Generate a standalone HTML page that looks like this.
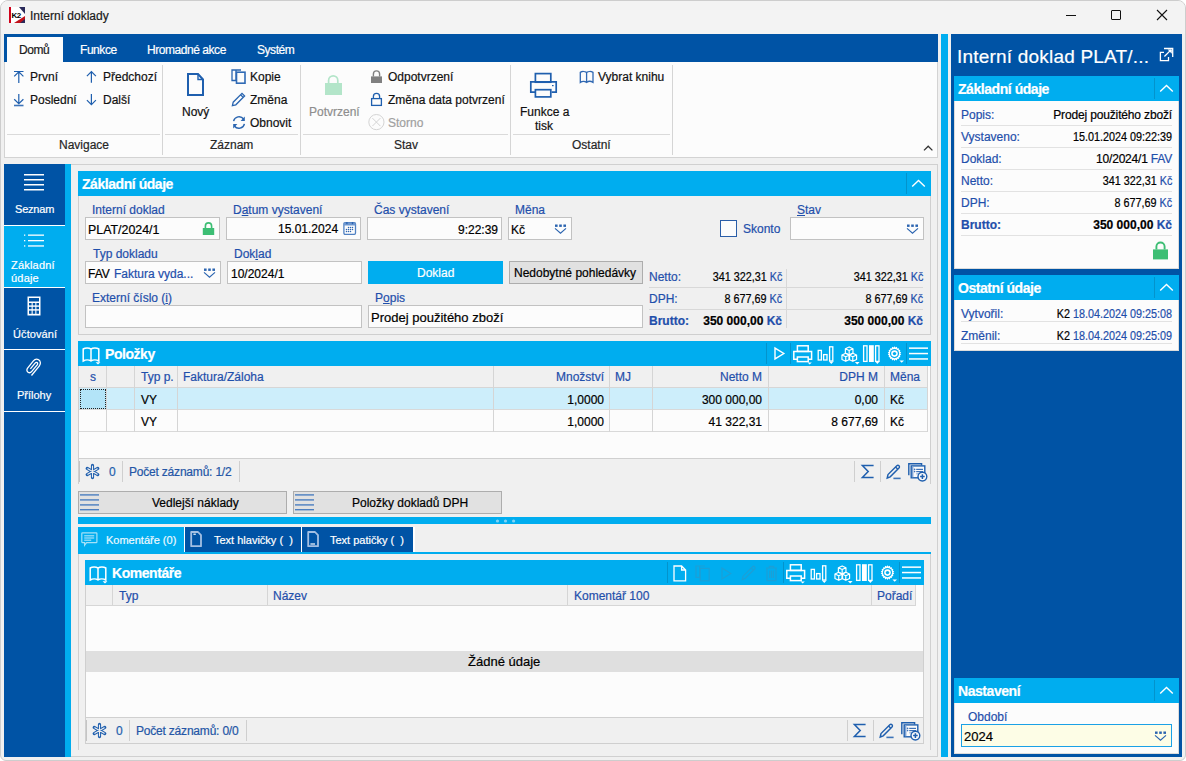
<!DOCTYPE html>
<html><head><meta charset="utf-8">
<style>
*{box-sizing:border-box;margin:0;padding:0}
html,body{width:1186px;height:761px;overflow:hidden;background:#ffffff}
body{font-family:"Liberation Sans",sans-serif;font-size:12px;color:#000;position:relative}
.a{position:absolute}
.t{position:absolute;white-space:nowrap;font-size:12px;line-height:16px;-webkit-text-stroke:0.2px currentColor}
.b{font-weight:bold}
.hdr{font-size:14px;letter-spacing:-0.45px}
.w{color:#fff}
.lb{color:#1f4fab}
.nv{background:#0053a5}
.cy{background:#00adef}
.inp{position:absolute;background:#fcfcfc;border:1px solid #c2c2c2}
.btn{position:absolute;background:#e1e1e1;border:1px solid #adadad}
.hl{position:absolute;height:1px;background:#dadada}
.vl{position:absolute;width:1px;background:#d5d5d5}
svg{position:absolute;overflow:visible}
</style></head><body>
<!-- window -->
<div class="a" style="left:0;top:0;width:1186px;height:761px;background:#f0f0f0;border:1px solid #cdcdcd;border-radius:8px 8px 6px 6px;overflow:hidden">
</div>
<!-- title bar -->
<div class="a" style="left:1px;top:1px;width:1184px;height:33px;background:#f3f3f3;border-radius:7px 7px 0 0"></div>
<svg style="left:9px;top:7px" width="16" height="16" viewBox="0 0 16 16">
<rect x="0" y="0" width="16" height="16" fill="#fff"/>
<rect x="0" y="0" width="2" height="16" fill="#d0021b"/>
<path d="M10 0H16V7Z" fill="#2a2a5a"/>
<path d="M16 9V16H5Z" fill="#c0101a"/>
<path d="M16 12V16H11Z" fill="#2a2a5a"/>
<text x="2.6" y="11" font-family="Liberation Sans" font-weight="bold" font-size="8" letter-spacing="-0.6" fill="#000">K2</text>
</svg>
<div class="t" style="left:30px;top:8px;color:#1a1a1a">Interní doklady</div>
<div class="a" style="left:1066px;top:15px;width:10px;height:1px;background:#111"></div>
<div class="a" style="left:1111px;top:10px;width:10px;height:10px;border:1px solid #111;border-radius:1px"></div>
<svg style="left:1157px;top:10px" width="10" height="10" viewBox="0 0 10 10"><path d="M0 0L10 10M10 0L0 10" stroke="#111" stroke-width="1.1"/></svg>

<!-- RIBBON -->
<div class="a nv" style="left:4px;top:34px;width:934px;height:28px"></div>
<div class="a" style="left:7px;top:37px;width:56px;height:25px;background:#fcfcfc"></div>
<div class="t" style="left:19px;top:42px;color:#1a1a1a;letter-spacing:-0.45px">Domů</div>
<div class="t w" style="left:80px;top:42px;letter-spacing:-0.45px">Funkce</div>
<div class="t w" style="left:147px;top:42px;letter-spacing:-0.45px">Hromadné akce</div>
<div class="t w" style="left:257px;top:42px;letter-spacing:-0.45px">Systém</div>
<div class="a" style="left:4px;top:62px;width:934px;height:96px;background:#fcfcfc;border:1px solid #d3d3d3;border-top:none"></div>
<!-- group separators -->
<div class="vl" style="left:162px;top:65px;height:90px"></div>
<div class="vl" style="left:300px;top:65px;height:90px"></div>
<div class="vl" style="left:510px;top:65px;height:90px"></div>
<div class="vl" style="left:672px;top:65px;height:90px"></div>
<div class="hl" style="left:7px;top:134px;width:153px"></div>
<div class="hl" style="left:165px;top:134px;width:133px"></div>
<div class="hl" style="left:303px;top:134px;width:205px"></div>
<div class="hl" style="left:513px;top:134px;width:157px"></div>
<div class="t" style="left:59px;top:137px;color:#262626">Navigace</div>
<div class="t" style="left:210px;top:137px;color:#262626">Záznam</div>
<div class="t" style="left:394px;top:137px;color:#262626">Stav</div>
<div class="t" style="left:572px;top:137px;color:#262626">Ostatní</div>
<!-- Navigace -->
<svg style="left:13px;top:70px" width="12" height="14" viewBox="0 0 12 14"><g stroke="#1f5fae" stroke-width="1.2" fill="none"><path d="M1 1.5H10.5M5.8 2V13M1.2 6.4L5.8 1.9L10.4 6.4"/></g></svg>
<div class="t" style="left:30px;top:69px;color:#111">První</div>
<svg style="left:13px;top:93px" width="12" height="14" viewBox="0 0 12 14"><g stroke="#1f5fae" stroke-width="1.2" fill="none"><path d="M5.8 1V11.2M1.2 6.2L5.8 10.7L10.4 6.2"/><path d="M1 12.5H10.5" stroke-width="1.6" stroke="#3d74b8"/></g></svg>
<div class="t" style="left:30px;top:92px;color:#111">Poslední</div>
<svg style="left:86px;top:70px" width="12" height="14" viewBox="0 0 12 14"><g stroke="#1f5fae" stroke-width="1.2" fill="none"><path d="M5.4 1.6V12.8M0.9 6.2L5.4 1.7L9.9 6.2"/></g></svg>
<div class="t" style="left:103px;top:69px;color:#111">Předchozí</div>
<svg style="left:86px;top:93px" width="12" height="14" viewBox="0 0 12 14"><g stroke="#1f5fae" stroke-width="1.2" fill="none"><path d="M5.4 1V12M0.9 7.1L5.4 11.6L9.9 7.1"/></g></svg>
<div class="t" style="left:103px;top:92px;color:#111">Další</div>
<!-- Záznam -->
<svg style="left:187px;top:73px" width="18" height="23" viewBox="0 0 18 23"><g stroke="#1f5fae" stroke-width="2" fill="none"><path d="M1 1H11L16 6.5V22H1Z"/><path d="M11 1V6.5H16" stroke-width="1.4"/></g></svg>
<div class="t" style="left:182px;top:104px;color:#111">Nový</div>
<svg style="left:231px;top:69px" width="15" height="16" viewBox="0 0 15 16"><g stroke="#2a65b0" stroke-width="1.3" fill="none"><path d="M5 2.5V1H10M1 1H5V11.5H1Z"/><rect x="5.5" y="3.2" width="8.5" height="11" stroke="#2f6ab5" stroke-width="1.6"/></g></svg>
<div class="t" style="left:250px;top:69px;color:#111">Kopie</div>
<svg style="left:231px;top:92px" width="15" height="15" viewBox="0 0 15 15"><g stroke="#2a65b0" stroke-width="1.3" fill="none"><path d="M1.4 13.6L2.2 10.2L11 1.4L13.6 4L4.8 12.8Z M9.6 2.8L12.2 5.4"/></g></svg>
<div class="t" style="left:250px;top:92px;color:#111">Změna</div>
<svg style="left:232px;top:115px" width="14" height="15" viewBox="0 0 14 15"><g stroke="#2a65b0" stroke-width="1.4" fill="none"><path d="M1.6 6.2A5.6 5.6 0 0 1 11.6 4"/><path d="M12.4 8.8A5.6 5.6 0 0 1 2.4 11"/></g><path d="M12.8 1.6V6H8.6Z" fill="#2a65b0"/><path d="M1.2 13.4V9H5.4Z" fill="#2a65b0"/></svg>
<div class="t" style="left:250px;top:115px;color:#111">Obnovit</div>
<!-- Stav -->
<svg style="left:324px;top:74px" width="19" height="22" viewBox="0 0 19 22"><path d="M4.6 9V6.4A4.6 4.6 0 0 1 13.8 6.4V9" stroke="#b3e5c9" stroke-width="1.7" fill="none"/><rect x="1" y="9" width="17" height="12" fill="#b3e5c9"/></svg>
<div class="t" style="left:309px;top:104px;color:#8e8e8e">Potvrzení</div>
<svg style="left:370px;top:69px" width="13" height="15" viewBox="0 0 13 15"><path d="M3.4 7.4V5A3 3 0 0 1 9.6 5V7.4" stroke="#808080" stroke-width="1.4" fill="none"/><rect x="1" y="7.4" width="11" height="6.6" fill="#808080"/></svg>
<div class="t" style="left:388px;top:69px;color:#111">Odpotvrzení</div>
<svg style="left:370px;top:92px" width="13" height="15" viewBox="0 0 13 15"><path d="M3.4 6.4V4.5A3 3 0 0 1 9.6 4.5V6.4" stroke="#1f5fae" stroke-width="1.3" fill="none"/><rect x="1.6" y="6.6" width="9.8" height="6.8" stroke="#1f5fae" stroke-width="1.3" fill="none"/></svg>
<div class="t" style="left:388px;top:92px;color:#111">Změna data potvrzení</div>
<svg style="left:368px;top:114px" width="17" height="17" viewBox="0 0 17 17"><circle cx="8.4" cy="8.1" r="7.6" stroke="#d4d4d4" stroke-width="1" fill="none"/><path d="M4.4 4.1L12.4 12.1M12.4 4.1L4.4 12.1" stroke="#d4d4d4" stroke-width="1"/></svg>
<div class="t" style="left:388px;top:115px;color:#a0a0a0">Storno</div>
<!-- Ostatní -->
<svg style="left:529px;top:72px" width="29" height="26" viewBox="0 0 29 26"><g stroke="#1f5fae" stroke-width="1.7" fill="none"><rect x="6.4" y="1.6" width="15.4" height="8.6"/><path d="M6.4 20.2H1.8V9.9H27.2V20.2H22.6"/><rect x="6.4" y="17.7" width="15.4" height="7.2"/></g><rect x="23" y="13" width="1.6" height="1.2" fill="#1f5fae"/></svg>
<div class="t" style="left:520px;top:104px;color:#111">Funkce a</div>
<div class="t" style="left:535px;top:118px;color:#111">tisk</div>
<svg style="left:579px;top:70px" width="16" height="14" viewBox="0 0 16 14"><g stroke="#3068b2" stroke-width="1.3" fill="none"><path d="M7.6 12.4V2.6C6 1.2 3 1.2 1.3 2.4V12.4C3 11.2 6 11.2 7.6 12.4C9.2 11.2 12.2 11.2 14 12.4V2.4C12.2 1.2 9.2 1.2 7.6 2.6"/></g></svg>
<div class="t" style="left:598px;top:69px;color:#111">Vybrat knihu</div>
<svg style="left:923px;top:145px" width="11" height="7" viewBox="0 0 11 7"><path d="M1 5.4L5.2 1.2L9.4 5.4" stroke="#333" stroke-width="1.3" fill="none"/></svg>

<!-- MAIN -->
<div class="a" style="left:4px;top:164px;width:934px;height:593px;background:#f0f0f0;border:1px solid #d0d0d0;border-left:none"></div>
<!-- sidebar -->
<div class="a nv" style="left:4px;top:164px;width:61px;height:593px"></div>
<div class="a cy" style="left:65px;top:164px;width:6px;height:593px"></div>
<div class="a cy" style="left:4px;top:226px;width:61px;height:61px"></div>
<div class="a" style="left:4px;top:225px;width:61px;height:1px;background:#fff"></div>
<div class="a" style="left:4px;top:287px;width:61px;height:1px;background:#fff"></div>
<div class="a" style="left:4px;top:349px;width:61px;height:1px;background:#fff"></div>
<div class="a" style="left:4px;top:411px;width:61px;height:1px;background:#fff"></div>
<svg style="left:24px;top:173px" width="21" height="18" viewBox="0 0 21 18"><g fill="#fff"><rect x="0" y="1" width="20" height="1.5"/><rect x="0" y="6" width="20" height="1.5"/><rect x="0" y="11" width="20" height="1.5"/><rect x="0" y="16" width="20" height="1.5"/></g></svg>
<div class="t w" style="left:15px;top:201px;font-size:11px;letter-spacing:-0.2px">Seznam</div>
<svg style="left:24px;top:233px" width="21" height="15" viewBox="0 0 21 15"><g fill="#fff"><rect x="0" y="1.5" width="1.3" height="1.3"/><rect x="0" y="7" width="1.3" height="1.3"/><rect x="0" y="12.3" width="1.3" height="1.3"/><rect x="4" y="1.5" width="16" height="1.3"/><rect x="4" y="7" width="16" height="1.3"/><rect x="4" y="12.3" width="16" height="1.3"/></g></svg>
<div class="t w" style="left:11px;top:257px;font-size:11px;letter-spacing:0.2px">Základní</div>
<div class="t w" style="left:11px;top:270px;font-size:11px;letter-spacing:0.2px">údaje</div>
<svg style="left:27px;top:296px" width="14" height="20" viewBox="0 0 14 20"><g fill="#fff"><path d="M0.5 0.5H13.5V19.5H0.5Z M2 2V5.5H12V2Z" fill-rule="evenodd"/></g><g fill="#0053a5"><rect x="2" y="7" width="2.6" height="2.4"/><rect x="5.7" y="7" width="2.6" height="2.4"/><rect x="9.4" y="7" width="2.6" height="2.4"/><rect x="2" y="10.8" width="2.6" height="2.4"/><rect x="5.7" y="10.8" width="2.6" height="2.4"/><rect x="9.4" y="10.8" width="2.6" height="2.4"/><rect x="2" y="14.6" width="2.6" height="3.2"/><rect x="5.7" y="14.6" width="2.6" height="3.2"/><rect x="9.4" y="14.6" width="2.6" height="3.2"/></g></svg>
<div class="t w" style="left:13px;top:326px;font-size:11px;letter-spacing:0.1px">Účtování</div>
<svg style="left:26px;top:358px" width="17" height="20" viewBox="0 0 17 20"><path d="M5.5 17.5L13.4 7.8C15.2 5.6 14.4 2.6 12.4 1.6C10.6 0.6 8.6 1.4 7.4 2.9L1.6 10.1C0.4 11.6 0.8 13.4 2 14.2C3.2 15 4.8 14.6 5.8 13.4L11.2 6.8C11.9 5.9 11.7 5 11.1 4.6C10.5 4.2 9.7 4.4 9.1 5.1L4.4 10.8" stroke="#fff" stroke-width="1.3" fill="none"/></svg>
<div class="t w" style="left:17px;top:387px;font-size:11px">Přílohy</div>

<!-- Základní údaje panel -->
<div class="a cy" style="left:78px;top:171px;width:853px;height:25px"></div>
<div class="t w b hdr" style="left:82px;top:176px">Základní údaje</div>
<div class="a" style="left:906px;top:173px;width:1px;height:21px;background:#0393cc"></div>
<svg style="left:911px;top:179px" width="15" height="9" viewBox="0 0 15 9"><path d="M1.2 7.6L7.5 1.5L13.8 7.6" stroke="#fff" stroke-width="1.4" fill="none"/></svg>
<div class="a" style="left:78px;top:196px;width:853px;height:139px;border:1px solid #cfcfcf;border-top:none"></div>
<!-- row1 -->
<div class="t lb" style="left:92px;top:202px">Interní doklad</div>
<div class="inp" style="left:85px;top:217px;width:135px;height:23px"></div>
<div class="t" style="left:88px;top:222px;font-size:12.4px">PLAT/2024/1</div>
<svg style="left:202px;top:221px" width="13" height="15" viewBox="0 0 13 15"><path d="M3.4 7.4V5A3 3 0 0 1 9.6 5V7.4" stroke="#3dbe74" stroke-width="1.6" fill="none"/><rect x="0.8" y="7" width="11.4" height="7" fill="#3dbe74"/></svg>
<div class="t lb" style="left:233px;top:202px">D<u>a</u>tum vystavení</div>
<div class="inp" style="left:226px;top:217px;width:135px;height:23px"></div>
<div class="t" style="left:278px;top:221px">15.01.2024</div>
<svg style="left:342px;top:221px" width="15" height="15" viewBox="0 0 15 15"><rect x="1.9" y="1.7" width="11.6" height="11.6" rx="1.2" stroke="#4f80c2" stroke-width="1.3" fill="#fcfcfc"/><rect x="1.9" y="1.7" width="11.6" height="2.8" fill="#6f98d0"/><rect x="4.2" y="1" width="1.4" height="2.2" rx="0.6" fill="#2a62b0"/><rect x="9.8" y="1" width="1.4" height="2.2" rx="0.6" fill="#2a62b0"/><g fill="#2f66b2"><circle cx="6.5" cy="6.5" r="0.75"/><circle cx="8.5" cy="6.5" r="0.75"/><circle cx="10.5" cy="6.5" r="0.75"/><circle cx="4.5" cy="8.5" r="0.75"/><circle cx="6.5" cy="8.5" r="0.75"/><circle cx="8.5" cy="8.5" r="0.75"/><circle cx="10.5" cy="8.5" r="0.75"/><circle cx="4.5" cy="10.5" r="0.75"/><circle cx="6.5" cy="10.5" r="0.75"/><circle cx="8.5" cy="10.5" r="0.75"/></g></svg>
<div class="t lb" style="left:374px;top:202px">Čas vystavení</div>
<div class="inp" style="left:367px;top:217px;width:135px;height:23px"></div>
<div class="t" style="left:458px;top:222px">9:22:39</div>
<div class="t lb" style="left:515px;top:202px">Měna</div>
<div class="inp" style="left:508px;top:217px;width:64px;height:23px"></div>
<div class="t" style="left:511px;top:222px">Kč</div>
<svg class="dd" style="left:554px;top:224px" width="13" height="11" viewBox="0 0 13 11"><g fill="#2b64b0"><rect x="1" y="0.5" width="2.6" height="2.4"/><rect x="5.2" y="0.5" width="2.6" height="2.4"/><rect x="9.4" y="0.5" width="2.6" height="2.4"/></g><path d="M1 4.4L6.5 9.2L12 4.4" stroke="#2b64b0" stroke-width="1.2" fill="none"/></svg>
<div class="a" style="left:720px;top:220px;width:17px;height:17px;border:1.5px solid #2a5ea8;background:#fcfcfc"></div>
<div class="t lb" style="left:743px;top:221px">Skonto</div>
<div class="t lb" style="left:797px;top:202px"><u>S</u>tav</div>
<div class="inp" style="left:790px;top:217px;width:134px;height:23px"></div>
<svg style="left:906px;top:224px" width="13" height="11" viewBox="0 0 13 11"><g fill="#2b64b0"><rect x="1" y="0.5" width="2.6" height="2.4"/><rect x="5.2" y="0.5" width="2.6" height="2.4"/><rect x="9.4" y="0.5" width="2.6" height="2.4"/></g><path d="M1 4.4L6.5 9.2L12 4.4" stroke="#2b64b0" stroke-width="1.2" fill="none"/></svg>
<!-- row2 -->
<div class="t lb" style="left:93px;top:246px">Typ dokladu</div>
<div class="inp" style="left:85px;top:261px;width:136px;height:23px"></div>
<div class="t" style="left:88px;top:266px">FAV</div>
<div class="t lb" style="left:114px;top:266px">Faktura vyda...</div>
<svg style="left:203px;top:268px" width="13" height="11" viewBox="0 0 13 11"><g fill="#2b64b0"><rect x="1" y="0.5" width="2.6" height="2.4"/><rect x="5.2" y="0.5" width="2.6" height="2.4"/><rect x="9.4" y="0.5" width="2.6" height="2.4"/></g><path d="M1 4.4L6.5 9.2L12 4.4" stroke="#2b64b0" stroke-width="1.2" fill="none"/></svg>
<div class="t lb" style="left:234px;top:246px">Dok<u>l</u>ad</div>
<div class="inp" style="left:227px;top:261px;width:135px;height:23px"></div>
<div class="t" style="left:231px;top:266px">10/2024/1</div>
<div class="a cy" style="left:368px;top:261px;width:135px;height:23px"></div>
<div class="t w" style="left:417px;top:265px">Doklad</div>
<div class="btn" style="left:509px;top:261px;width:134px;height:23px"></div>
<div class="t" style="left:514px;top:265px">Nedobytné pohledávky</div>
<!-- totals -->
<div class="vl" style="left:786px;top:269px;height:59px;background:#d8d8d8"></div>
<div class="hl" style="left:649px;top:287px;width:274px;background:#d8d8d8"></div>
<div class="hl" style="left:649px;top:309px;width:274px;background:#d8d8d8"></div>
<div class="t lb" style="left:649px;top:269px">Netto:</div>
<div class="t" style="right:404px;top:269px;transform:scaleX(0.9);transform-origin:100% 50%">341 322,31 <span class="lb">Kč</span></div>
<div class="t" style="right:263px;top:269px;transform:scaleX(0.9);transform-origin:100% 50%">341 322,31 <span class="lb">Kč</span></div>
<div class="t lb" style="left:649px;top:291px">DPH:</div>
<div class="t" style="right:404px;top:291px;transform:scaleX(0.9);transform-origin:100% 50%">8 677,69 <span class="lb">Kč</span></div>
<div class="t" style="right:263px;top:291px;transform:scaleX(0.9);transform-origin:100% 50%">8 677,69 <span class="lb">Kč</span></div>
<div class="t lb b" style="left:649px;top:313px">Brutto:</div>
<div class="t b" style="right:404px;top:313px">350 000,00 <span class="lb">Kč</span></div>
<div class="t b" style="right:263px;top:313px">350 000,00 <span class="lb">Kč</span></div>
<!-- row3 -->
<div class="t lb" style="left:92px;top:290px">Externí číslo (<u>i</u>)</div>
<div class="inp" style="left:85px;top:305px;width:277px;height:23px"></div>
<div class="t lb" style="left:375px;top:290px">P<u>o</u>pis</div>
<div class="inp" style="left:368px;top:305px;width:275px;height:23px"></div>
<div class="t" style="left:371px;top:310px;font-size:13px">Prodej použitého zboží</div>
<!-- Položky panel -->
<div class="a cy" style="left:78px;top:341px;width:853px;height:25px"></div>
<svg style="left:82px;top:346px" width="20" height="19" viewBox="0 0 20 19"><g stroke="#fff" stroke-width="1.5" fill="none"><path d="M9 15V3.2C7 1.6 3.4 1.6 1.2 3V15C3.4 13.6 7 13.6 9 15C11 13.6 14.6 13.6 16.8 15V3C14.6 1.6 11 1.6 9 3.2"/></g><path d="M13.6 16.2H18.4L16 18.6Z" fill="#fff"/></svg>
<div class="t w b hdr" style="left:105px;top:346px">Položky</div>
<div class="a" style="left:766px;top:343px;width:1px;height:21px;background:#0393cc"></div>
<div class="a" style="left:790px;top:343px;width:1px;height:21px;background:#0393cc"></div>
<div class="a" style="left:906px;top:343px;width:1px;height:21px;background:#0393cc"></div>
<svg style="left:774px;top:347px" width="11" height="13" viewBox="0 0 11 13"><path d="M1 1.1V11.9L9.8 6.5Z" stroke="#fff" stroke-width="1.4" fill="none" stroke-linejoin="miter"/></svg>
<svg class="ico-print" style="left:793px;top:345px" width="20" height="20" viewBox="0 0 20 20"><g stroke="#fff" stroke-width="1.5" fill="none"><rect x="4.4" y="0.8" width="10.8" height="5.6"/><path d="M4.4 14.2H0.8V6.4H18.6V14.2H15.2"/><rect x="4.4" y="12" width="10.8" height="4.6"/></g><path d="M14.6 17.4H18.8L16.7 19.6Z" fill="#fff"/></svg>
<svg style="left:817px;top:346px" width="19" height="19" viewBox="0 0 19 19"><g stroke="#fff" stroke-width="1.3" fill="none"><rect x="1.2" y="4.4" width="3.2" height="9.6"/><rect x="6.6" y="8.6" width="3.4" height="5.4"/><rect x="12.6" y="0.8" width="3.2" height="14.2"/></g><path d="M12 15.4H16.6L14.3 18Z" fill="#fff"/></svg>
<svg style="left:841px;top:346px" width="19" height="19" viewBox="0 0 20 20"><g stroke="#fff" stroke-width="1.25" fill="none" stroke-linejoin="round"><path d="M8.6 1L12.6 2.9V7.6L8.6 9.5L4.6 7.6V2.9Z M4.6 2.9L8.6 4.8L12.6 2.9M8.6 4.8V9.5"/><path d="M5 7.6L9 9.5V14.2L5 16.1L1 14.2V9.5Z M1 9.5L5 11.4L9 9.5M5 11.4V16.1"/><path d="M12.4 7.6L16.4 9.5V14.2L12.4 16.1L8.4 14.2V9.5Z M8.4 9.5L12.4 11.4L16.4 9.5M12.4 11.4V16.1"/></g><path d="M14.6 16.8H19.6L17.1 19.4Z" fill="#fff"/></svg>
<svg style="left:862px;top:344px" width="20" height="21" viewBox="0 0 20 21"><g stroke="#fff" stroke-width="1.3" fill="none"><rect x="1.6" y="1.8" width="3.4" height="15.6"/><rect x="13.6" y="1.8" width="3.4" height="15.6"/></g><rect x="7" y="1.2" width="4.8" height="16.8" fill="#fff"/><path d="M13.2 17.6H17.6L15.4 20Z" fill="#fff"/></svg>
<svg style="left:886px;top:345px" width="19" height="20" viewBox="0 0 19 20"><g fill="#fff"><path d="M8.5 1.2L9.4 2.6L10.9 1.8L11.3 3.4L12.9 3.2L12.8 4.8L14.4 5.1L13.8 6.6L15.2 7.4L14.2 8.6L15.2 9.8L13.8 10.6L14.4 12.1L12.8 12.4L12.9 14L11.3 13.8L10.9 15.4L9.4 14.6L8.5 16L7.6 14.6L6.1 15.4L5.7 13.8L4.1 14L4.2 12.4L2.6 12.1L3.2 10.6L1.8 9.8L2.8 8.6L1.8 7.4L3.2 6.6L2.6 5.1L4.2 4.8L4.1 3.2L5.7 3.4L6.1 1.8L7.6 2.6Z"/></g><circle cx="8.5" cy="8.6" r="4.6" fill="#00adef"/><circle cx="8.5" cy="8.6" r="3.3" fill="#fff"/><circle cx="8.5" cy="8.6" r="1.7" fill="#00adef"/><path d="M13.4 15.4H18L15.7 17.8Z" fill="#fff"/></svg>
<svg style="left:909px;top:347px" width="20" height="13" viewBox="0 0 20 13"><g fill="#fff"><rect x="0" y="0.4" width="19" height="1.5"/><rect x="0" y="5.8" width="19" height="1.5"/><rect x="0" y="11.2" width="19" height="1.5"/></g></svg>
<!-- grid -->
<div class="a" style="left:78px;top:366px;width:853px;height:118px;background:#fcfcfc;border:1px solid #cfcfcf;border-top:none"></div>
<div class="a" style="left:79px;top:366px;width:849px;height:22px;background:#f0f0f0;border-bottom:1px solid #d6d6d6"></div>
<div class="a" style="left:79px;top:388px;width:849px;height:21px;background:#cdeefb"></div>
<div class="a" style="left:80px;top:389px;width:26px;height:20px;background:#b3e4f8;border:1px dotted #222"></div>
<div class="hl" style="left:79px;top:409px;width:849px;background:#d9d9d9"></div>
<div class="hl" style="left:79px;top:431px;width:849px;background:#d9d9d9"></div>
<div class="a" style="left:79px;top:458px;width:851px;height:1px;background:#d0d0d0"></div>
<div class="a" style="left:79px;top:459px;width:851px;height:25px;background:#f0f0f0"></div>
<div class="vl" style="left:106px;top:366px;height:66px"></div>
<div class="vl" style="left:134px;top:366px;height:66px"></div>
<div class="vl" style="left:177px;top:366px;height:66px"></div>
<div class="vl" style="left:493px;top:366px;height:66px"></div>
<div class="vl" style="left:609px;top:366px;height:66px"></div>
<div class="vl" style="left:652px;top:366px;height:66px"></div>
<div class="vl" style="left:768px;top:366px;height:66px"></div>
<div class="vl" style="left:884px;top:366px;height:66px"></div>
<div class="vl" style="left:927px;top:366px;height:66px"></div>
<div class="t lb" style="left:90px;top:369px">s</div>
<div class="t lb" style="left:141px;top:369px">Typ p.</div>
<div class="t lb" style="left:183px;top:369px">Faktura/Záloha</div>
<div class="t lb" style="right:582px;top:369px">Množství</div>
<div class="t lb" style="left:615px;top:369px">MJ</div>
<div class="t lb" style="right:424px;top:369px">Netto M</div>
<div class="t lb" style="right:308px;top:369px">DPH M</div>
<div class="t lb" style="left:890px;top:369px">Měna</div>
<div class="t" style="left:141px;top:392px">VY</div>
<div class="t" style="right:582px;top:392px">1,0000</div>
<div class="t" style="right:424px;top:392px">300 000,00</div>
<div class="t" style="right:308px;top:392px">0,00</div>
<div class="t" style="left:890px;top:392px">Kč</div>
<div class="t" style="left:141px;top:414px">VY</div>
<div class="t" style="right:582px;top:414px">1,0000</div>
<div class="t" style="right:424px;top:414px">41 322,31</div>
<div class="t" style="right:308px;top:414px">8 677,69</div>
<div class="t" style="left:890px;top:414px">Kč</div>
<!-- footer -->
<div class="a" style="left:79px;top:461px;width:1px;height:21px;background:#c4c4c4"></div>
<svg class="snow" style="left:84px;top:463px" width="17" height="17" viewBox="0 0 17 17"><g stroke="#1f5fae" stroke-width="3.2" stroke-linecap="round"><path d="M8.5 2.4V14.6M3.2 5.45L13.8 11.55M3.2 11.55L13.8 5.45"/></g><g stroke="#f0f0f0" stroke-width="1.1" stroke-linecap="round"><path d="M8.5 3V14M3.75 5.75L13.25 11.25M3.75 11.25L13.25 5.75"/></g></svg>
<div class="t lb" style="left:109px;top:464px;color:#1f5fae">0</div>
<div class="vl" style="left:122px;top:461px;height:21px;background:#cfcfcf"></div>
<div class="t lb" style="left:129px;top:464px;color:#2456a6;letter-spacing:-0.2px">Počet záznamů: 1/2</div>
<div class="vl" style="left:239px;top:461px;height:21px;background:#cfcfcf"></div>
<div class="vl" style="left:854px;top:461px;height:21px;background:#cfcfcf"></div>
<div class="vl" style="left:880px;top:461px;height:21px;background:#cfcfcf"></div>
<svg class="sigma" style="left:861px;top:464px" width="14" height="15" viewBox="0 0 14 15"><path d="M12.6 1.6H1.4L7.2 7.5L1.4 13.4H12.6" stroke="#1f5fae" stroke-width="1.5" fill="none"/></svg>
<svg class="pen" style="left:886px;top:464px" width="16" height="16" viewBox="0 0 16 16"><g stroke="#1f5fae" stroke-width="1.4" fill="none"><path d="M1.2 14L2 10.6L10.8 1.8C11.4 1.2 12.4 1.2 13 1.8C13.6 2.4 13.6 3.4 13 4L4.2 12.8Z M9.6 3L11.8 5.2"/></g><rect x="7.4" y="13.6" width="7.2" height="1.6" fill="#3d74b8"/></svg>
<svg class="addrec" style="left:907px;top:462px" width="21" height="20" viewBox="0 0 21 20"><path d="M1.8 13.2V1.8H14.6V3.6" stroke="#1f5fae" stroke-width="1.4" fill="none"/><rect x="4.2" y="3.9" width="13.6" height="11.9" stroke="#1f5fae" stroke-width="1.4" fill="#fafafa"/><rect x="5" y="4.6" width="1.4" height="10.6" fill="#7fa3d4"/><g fill="#3d72b8"><circle cx="7.6" cy="7.4" r="0.8"/><circle cx="7.6" cy="9.6" r="0.8"/><rect x="9.2" y="6.8" width="6.8" height="1.2"/><rect x="9.2" y="9" width="6.8" height="1.2"/><rect x="9.2" y="11.2" width="5" height="1.2" fill="#8fb0dc"/></g><circle cx="15.4" cy="14.6" r="4.4" fill="#fafafa" stroke="#1f5fae" stroke-width="1.4"/><path d="M15.4 12.3V16.9M13.1 14.6H17.7" stroke="#1f5fae" stroke-width="1.5"/></svg>
<!-- buttons -->
<div class="btn" style="left:78px;top:491px;width:209px;height:23px"></div>
<svg style="left:80px;top:493px" width="20" height="19" viewBox="0 0 20 19"><g fill="#4d7fc0"><rect x="0" y="1.2" width="19" height="1.4"/><rect x="0" y="6.2" width="19" height="1.4"/><rect x="0" y="11.2" width="19" height="1.4"/><rect x="0" y="16" width="19" height="1.4"/></g></svg>
<div class="t" style="left:152px;top:495px">Vedlejší náklady</div>
<div class="btn" style="left:293px;top:491px;width:209px;height:23px"></div>
<svg style="left:295px;top:493px" width="20" height="19" viewBox="0 0 20 19"><g fill="#4d7fc0"><rect x="0" y="1.2" width="19" height="1.4"/><rect x="0" y="6.2" width="19" height="1.4"/><rect x="0" y="11.2" width="19" height="1.4"/><rect x="0" y="16" width="19" height="1.4"/></g></svg>
<div class="t" style="left:352px;top:495px">Položky dokladů DPH</div>
<!-- splitter -->
<div class="a cy" style="left:78px;top:517px;width:853px;height:7px"></div>
<svg style="left:495px;top:519px" width="22" height="4" viewBox="0 0 22 4"><g fill="#80d4f6"><circle cx="2.5" cy="2" r="1.6"/><circle cx="10.5" cy="2" r="1.6"/><circle cx="18.6" cy="2" r="1.6"/></g></svg>
<!-- tabs -->
<div class="a cy" style="left:78px;top:527px;width:106px;height:25px"></div>
<div class="a" style="left:184px;top:527px;width:1px;height:25px;background:#fff"></div>
<div class="a nv" style="left:185px;top:527px;width:116px;height:25px"></div>
<div class="a" style="left:301px;top:527px;width:1px;height:25px;background:#fff"></div>
<div class="a nv" style="left:302px;top:527px;width:111px;height:25px"></div>
<div class="a" style="left:413px;top:527px;width:2px;height:25px;background:#fff"></div>
<div class="a cy" style="left:78px;top:552px;width:853px;height:2px"></div>
<svg style="left:81px;top:532px" width="17" height="15" viewBox="0 0 17 15"><path d="M1.5 0.8H15.2Q15.9 0.8 15.9 1.5V9.9Q15.9 10.6 15.2 10.6H5.6L3.6 13.2V10.6H1.5Q0.8 10.6 0.8 9.9V1.5Q0.8 0.8 1.5 0.8Z" stroke="#a6e1f8" stroke-width="1.2" fill="none"/><g fill="#a6e1f8"><rect x="3.2" y="3.2" width="10" height="1.2"/><rect x="3.2" y="5.4" width="10" height="1.2"/><rect x="3.2" y="7.6" width="7" height="1.2"/></g></svg>
<div class="t" style="left:106px;top:532px;font-size:11px;color:#eefaff">Komentáře (0)</div>
<svg style="left:189px;top:530px" width="14" height="18" viewBox="0 0 14 18"><path d="M2.2 2H9L12 5.2V16.2H2.2Z" stroke="#a3bfe3" stroke-width="1.8" fill="none" stroke-linejoin="round"/><path d="M4.4 4.2H6.8" stroke="#ffffff" stroke-width="1.2"/></svg>
<div class="t w" style="left:214px;top:532px;font-size:11px">Text hlavičky (&nbsp;&nbsp;)</div>
<svg style="left:306px;top:530px" width="14" height="18" viewBox="0 0 14 18"><path d="M2.2 2H9L12 5.2V16.2H2.2Z" stroke="#a3bfe3" stroke-width="1.8" fill="none" stroke-linejoin="round"/><path d="M4.4 14H9" stroke="#ffffff" stroke-width="1.2"/></svg>
<div class="t w" style="left:330px;top:532px;font-size:11px">Text patičky (&nbsp;&nbsp;)</div>
<!-- tab page border -->
<div class="a" style="left:78px;top:554px;width:1px;height:196px;background:#d0d0d0"></div>
<div class="a" style="left:930px;top:554px;width:1px;height:196px;background:#d0d0d0"></div>
<!-- Komentáře panel -->
<div class="a cy" style="left:85px;top:560px;width:839px;height:25px"></div>
<svg style="left:89px;top:565px" width="20" height="19" viewBox="0 0 20 19"><g stroke="#fff" stroke-width="1.5" fill="none"><path d="M9 15V3.2C7 1.6 3.4 1.6 1.2 3V15C3.4 13.6 7 13.6 9 15C11 13.6 14.6 13.6 16.8 15V3C14.6 1.6 11 1.6 9 3.2"/></g><path d="M13.6 16.2H18.4L16 18.6Z" fill="#fff"/></svg>
<div class="t w b hdr" style="left:112px;top:565px">Komentáře</div>
<div class="a" style="left:667px;top:562px;width:1px;height:21px;background:#0393cc"></div>
<div class="a" style="left:783px;top:562px;width:1px;height:21px;background:#0393cc"></div>
<div class="a" style="left:899px;top:562px;width:1px;height:21px;background:#0393cc"></div>
<svg style="left:673px;top:565px" width="14" height="17" viewBox="0 0 14 17"><path d="M1 1H8.6L12.6 5V15.8H1Z M8.6 1V5H12.6" stroke="#fff" stroke-width="1.3" fill="none"/></svg>
<svg style="left:695px;top:565px" width="16" height="17" viewBox="0 0 16 17"><g stroke="#1c9fd6" stroke-width="1.2" fill="none"><path d="M4.6 2.6V1H10M1 1H4.6V12.4H1Z"/><rect x="5.2" y="3.4" width="9" height="12.4"/></g></svg>
<svg style="left:721px;top:567px" width="11" height="13" viewBox="0 0 11 13"><path d="M1 1.1V11.9L9.8 6.5Z" stroke="#1c9fd6" stroke-width="1.2" fill="none"/></svg>
<svg style="left:741px;top:565px" width="16" height="16" viewBox="0 0 16 16"><path d="M1.2 14.6L2 11.2L11.4 1.8C12 1.2 13 1.2 13.6 1.8C14.2 2.4 14.2 3.4 13.6 4L4.2 13.4Z M10.2 3L12.4 5.2" stroke="#1c9fd6" stroke-width="1.2" fill="none"/></svg>
<svg style="left:765px;top:565px" width="13" height="17" viewBox="0 0 13 17"><g stroke="#1c9fd6" stroke-width="1.2" fill="none"><path d="M1 3H12M4.4 3V1.4H8.6V3M2 3.2V15.6H11V3.2M4.6 5.6V13M6.5 5.6V13M8.4 5.6V13"/></g></svg>
<svg style="left:785px;top:564px" width="22" height="20" viewBox="0 0 20 20"><g stroke="#fff" stroke-width="1.5" fill="none"><rect x="4.4" y="0.8" width="10.8" height="5.6"/><path d="M4.4 14.2H0.8V6.4H18.6V14.2H15.2"/><rect x="4.4" y="12" width="10.8" height="4.6"/></g><path d="M14.6 17.4H18.8L16.7 19.6Z" fill="#fff"/></svg>
<svg style="left:810px;top:565px" width="19" height="19" viewBox="0 0 19 19"><g stroke="#fff" stroke-width="1.3" fill="none"><rect x="1.2" y="4.4" width="3.2" height="9.6"/><rect x="6.6" y="8.6" width="3.4" height="5.4"/><rect x="12.6" y="0.8" width="3.2" height="14.2"/></g><path d="M12 15.4H16.6L14.3 18Z" fill="#fff"/></svg>
<svg style="left:834px;top:565px" width="19" height="19" viewBox="0 0 20 20"><g stroke="#fff" stroke-width="1.25" fill="none" stroke-linejoin="round"><path d="M8.6 1L12.6 2.9V7.6L8.6 9.5L4.6 7.6V2.9Z M4.6 2.9L8.6 4.8L12.6 2.9M8.6 4.8V9.5"/><path d="M5 7.6L9 9.5V14.2L5 16.1L1 14.2V9.5Z M1 9.5L5 11.4L9 9.5M5 11.4V16.1"/><path d="M12.4 7.6L16.4 9.5V14.2L12.4 16.1L8.4 14.2V9.5Z M8.4 9.5L12.4 11.4L16.4 9.5M12.4 11.4V16.1"/></g><path d="M14.6 16.8H19.6L17.1 19.4Z" fill="#fff"/></svg>
<svg style="left:855px;top:563px" width="20" height="21" viewBox="0 0 20 21"><g stroke="#fff" stroke-width="1.3" fill="none"><rect x="1.6" y="1.8" width="3.4" height="15.6"/><rect x="13.6" y="1.8" width="3.4" height="15.6"/></g><rect x="7" y="1.2" width="4.8" height="16.8" fill="#fff"/><path d="M13.2 17.6H17.6L15.4 20Z" fill="#fff"/></svg>
<svg style="left:879px;top:564px" width="19" height="20" viewBox="0 0 19 20"><g fill="#fff"><path d="M8.5 1.2L9.4 2.6L10.9 1.8L11.3 3.4L12.9 3.2L12.8 4.8L14.4 5.1L13.8 6.6L15.2 7.4L14.2 8.6L15.2 9.8L13.8 10.6L14.4 12.1L12.8 12.4L12.9 14L11.3 13.8L10.9 15.4L9.4 14.6L8.5 16L7.6 14.6L6.1 15.4L5.7 13.8L4.1 14L4.2 12.4L2.6 12.1L3.2 10.6L1.8 9.8L2.8 8.6L1.8 7.4L3.2 6.6L2.6 5.1L4.2 4.8L4.1 3.2L5.7 3.4L6.1 1.8L7.6 2.6Z"/></g><circle cx="8.5" cy="8.6" r="4.6" fill="#00adef"/><circle cx="8.5" cy="8.6" r="3.3" fill="#fff"/><circle cx="8.5" cy="8.6" r="1.7" fill="#00adef"/><path d="M13.4 15.4H18L15.7 17.8Z" fill="#fff"/></svg>
<svg style="left:902px;top:566px" width="20" height="13" viewBox="0 0 20 13"><g fill="#fff"><rect x="0" y="0.4" width="19" height="1.5"/><rect x="0" y="5.8" width="19" height="1.5"/><rect x="0" y="11.2" width="19" height="1.5"/></g></svg>
<!-- komentare grid -->
<div class="a" style="left:85px;top:585px;width:839px;height:159px;background:#fcfcfc;border:1px solid #cfcfcf;border-top:none"></div>
<div class="a" style="left:86px;top:585px;width:830px;height:21px;background:#f0f0f0;border-bottom:1px solid #d6d6d6;border-right:1px solid #d6d6d6"></div>
<div class="vl" style="left:112px;top:585px;height:20px"></div>
<div class="vl" style="left:267px;top:585px;height:20px"></div>
<div class="vl" style="left:567px;top:585px;height:20px"></div>
<div class="vl" style="left:871px;top:585px;height:20px"></div>
<div class="t lb" style="left:119px;top:588px">Typ</div>
<div class="t lb" style="left:273px;top:588px">Název</div>
<div class="t lb" style="left:574px;top:588px">Komentář 100</div>
<div class="t lb" style="left:877px;top:588px">Pořadí</div>
<div class="a" style="left:86px;top:651px;width:837px;height:21px;background:#dfdfdf"></div>
<div class="t" style="left:468px;top:654px;font-size:13px">Žádné údaje</div>
<div class="a" style="left:86px;top:717px;width:837px;height:1px;background:#d0d0d0"></div>
<div class="a" style="left:86px;top:718px;width:837px;height:25px;background:#f0f0f0"></div>
<div class="a" style="left:86px;top:720px;width:1px;height:21px;background:#c4c4c4"></div>
<svg style="left:91px;top:722px" width="17" height="17" viewBox="0 0 17 17"><g stroke="#1f5fae" stroke-width="3.2" stroke-linecap="round"><path d="M8.5 2.4V14.6M3.2 5.45L13.8 11.55M3.2 11.55L13.8 5.45"/></g><g stroke="#f0f0f0" stroke-width="1.1" stroke-linecap="round"><path d="M8.5 3V14M3.75 5.75L13.25 11.25M3.75 11.25L13.25 5.75"/></g></svg>
<div class="t" style="left:116px;top:723px;color:#1f5fae">0</div>
<div class="vl" style="left:129px;top:720px;height:21px;background:#cfcfcf"></div>
<div class="t" style="left:136px;top:723px;color:#2456a6;letter-spacing:-0.2px">Počet záznamů: 0/0</div>
<div class="vl" style="left:246px;top:720px;height:21px;background:#cfcfcf"></div>
<div class="vl" style="left:847px;top:720px;height:21px;background:#cfcfcf"></div>
<div class="vl" style="left:873px;top:720px;height:21px;background:#cfcfcf"></div>
<svg style="left:853px;top:723px" width="14" height="15" viewBox="0 0 14 15"><path d="M12.6 1.6H1.4L7.2 7.5L1.4 13.4H12.6" stroke="#1f5fae" stroke-width="1.5" fill="none"/></svg>
<svg style="left:879px;top:723px" width="16" height="16" viewBox="0 0 16 16"><g stroke="#1f5fae" stroke-width="1.4" fill="none"><path d="M1.2 14L2 10.6L10.8 1.8C11.4 1.2 12.4 1.2 13 1.8C13.6 2.4 13.6 3.4 13 4L4.2 12.8Z M9.6 3L11.8 5.2"/></g><rect x="7.4" y="13.6" width="7.2" height="1.6" fill="#3d74b8"/></svg>
<svg style="left:900px;top:721px" width="21" height="20" viewBox="0 0 21 20"><path d="M1.8 13.2V1.8H14.6V3.6" stroke="#1f5fae" stroke-width="1.4" fill="none"/><rect x="4.2" y="3.9" width="13.6" height="11.9" stroke="#1f5fae" stroke-width="1.4" fill="#fafafa"/><rect x="5" y="4.6" width="1.4" height="10.6" fill="#7fa3d4"/><g fill="#3d72b8"><circle cx="7.6" cy="7.4" r="0.8"/><circle cx="7.6" cy="9.6" r="0.8"/><rect x="9.2" y="6.8" width="6.8" height="1.2"/><rect x="9.2" y="9" width="6.8" height="1.2"/><rect x="9.2" y="11.2" width="5" height="1.2" fill="#8fb0dc"/></g><circle cx="15.4" cy="14.6" r="4.4" fill="#fafafa" stroke="#1f5fae" stroke-width="1.4"/><path d="M15.4 12.3V16.9M13.1 14.6H17.7" stroke="#1f5fae" stroke-width="1.5"/></svg>

<!-- RIGHT -->
<div class="a cy" style="left:941px;top:34px;width:7px;height:723px"></div>
<div class="a nv" style="left:951px;top:34px;width:231px;height:723px"></div>
<div class="t w" style="left:957px;top:45px;font-size:19px;line-height:24px;letter-spacing:0.2px">Interní doklad PLAT/...</div>
<svg style="left:1159px;top:47px" width="16" height="16" viewBox="0 0 16 16"><g stroke="#fff" stroke-width="1.3" fill="none"><path d="M5 1.5H13.7V10"/><path d="M5 5.4H1.4V13.7H9.5V10"/><path d="M5.4 9.5L12 2.9"/></g><path d="M8.6 2.6H12.8V6.8Z" fill="#fff"/></svg>
<!-- section 1 -->
<div class="a cy" style="left:954px;top:76px;width:225px;height:25px"></div>
<div class="t w b hdr" style="left:958px;top:81px">Základní údaje</div>
<div class="a" style="left:1154px;top:78px;width:1px;height:21px;background:#0393cc"></div>
<svg style="left:1159px;top:84px" width="15" height="9" viewBox="0 0 15 9"><path d="M1.2 7.6L7.5 1.5L13.8 7.6" stroke="#fff" stroke-width="1.4" fill="none"/></svg>
<div class="a" style="left:954px;top:101px;width:225px;height:168px;background:#fcfcfc;border:1px solid #dcdcdc;border-top:none"></div>
<div class="hl" style="left:961px;top:125px;width:211px;background:#e2e2e2"></div>
<div class="hl" style="left:961px;top:147px;width:211px;background:#e2e2e2"></div>
<div class="hl" style="left:961px;top:169px;width:211px;background:#e2e2e2"></div>
<div class="hl" style="left:961px;top:191px;width:211px;background:#e2e2e2"></div>
<div class="hl" style="left:961px;top:213px;width:211px;background:#e2e2e2"></div>
<div class="hl" style="left:961px;top:235px;width:211px;background:#e2e2e2"></div>
<div class="t lb" style="left:961px;top:107px">Popis:</div>
<div class="t" style="right:14px;top:107px;letter-spacing:-0.15px">Prodej použitého zboží</div>
<div class="t lb" style="left:961px;top:129px">Vystaveno:</div>
<div class="t" style="right:14px;top:129px;transform:scaleX(0.9);transform-origin:100% 50%">15.01.2024 09:22:39</div>
<div class="t lb" style="left:961px;top:151px">Doklad:</div>
<div class="t" style="right:14px;top:151px;letter-spacing:-0.2px">10/2024/1 <span class="lb">FAV</span></div>
<div class="t lb" style="left:961px;top:173px">Netto:</div>
<div class="t" style="right:14px;top:173px;transform:scaleX(0.9);transform-origin:100% 50%">341 322,31 <span class="lb">Kč</span></div>
<div class="t lb" style="left:961px;top:195px">DPH:</div>
<div class="t" style="right:14px;top:195px;transform:scaleX(0.9);transform-origin:100% 50%">8 677,69 <span class="lb">Kč</span></div>
<div class="t lb b" style="left:961px;top:217px">Brutto:</div>
<div class="t b" style="right:14px;top:217px">350 000,00 <span class="lb">Kč</span></div>
<svg style="left:1152px;top:241px" width="17" height="19" viewBox="0 0 17 19"><path d="M4.4 8.6V5.6A4.1 4.1 0 0 1 12.6 5.6V8.6" stroke="#3dbe74" stroke-width="1.9" fill="none"/><rect x="1" y="8.4" width="15" height="10" fill="#3dbe74"/></svg>
<!-- section 2 -->
<div class="a cy" style="left:954px;top:275px;width:225px;height:25px"></div>
<div class="t w b hdr" style="left:958px;top:280px">Ostatní údaje</div>
<div class="a" style="left:1154px;top:277px;width:1px;height:21px;background:#0393cc"></div>
<svg style="left:1159px;top:283px" width="15" height="9" viewBox="0 0 15 9"><path d="M1.2 7.6L7.5 1.5L13.8 7.6" stroke="#fff" stroke-width="1.4" fill="none"/></svg>
<div class="a" style="left:954px;top:300px;width:225px;height:51px;background:#fcfcfc;border:1px solid #dcdcdc;border-top:none"></div>
<div class="hl" style="left:961px;top:321px;width:211px;background:#e2e2e2"></div>
<div class="hl" style="left:961px;top:343px;width:211px;background:#e2e2e2"></div>
<div class="t lb" style="left:961px;top:306px">Vytvořil:</div>
<div class="t" style="right:14px;top:306px;transform:scaleX(0.9);transform-origin:100% 50%">K2 <span class="lb">18.04.2024 09:25:08</span></div>
<div class="t lb" style="left:961px;top:328px">Změnil:</div>
<div class="t" style="right:14px;top:328px;transform:scaleX(0.9);transform-origin:100% 50%">K2 <span class="lb">18.04.2024 09:25:09</span></div>
<!-- section 3 -->
<div class="a cy" style="left:954px;top:678px;width:225px;height:25px"></div>
<div class="t w b hdr" style="left:958px;top:683px">Nastavení</div>
<div class="a" style="left:1154px;top:680px;width:1px;height:21px;background:#0393cc"></div>
<svg style="left:1159px;top:686px" width="15" height="9" viewBox="0 0 15 9"><path d="M1.2 7.6L7.5 1.5L13.8 7.6" stroke="#fff" stroke-width="1.4" fill="none"/></svg>
<div class="a" style="left:954px;top:703px;width:225px;height:51px;background:#fcfcfc;border:1px solid #dcdcdc;border-top:none"></div>
<div class="t lb" style="left:968px;top:709px">Období</div>
<div class="a" style="left:961px;top:724px;width:211px;height:23px;background:#fdfde6;border:1px solid #1ba1e6"></div>
<div class="t" style="left:964px;top:729px;font-size:13px">2024</div>
<svg style="left:1154px;top:731px" width="13" height="11" viewBox="0 0 13 11"><g fill="#2b64b0"><rect x="1" y="0.5" width="2.6" height="2.4"/><rect x="5.2" y="0.5" width="2.6" height="2.4"/><rect x="9.4" y="0.5" width="2.6" height="2.4"/></g><path d="M1 4.4L6.5 9.2L12 4.4" stroke="#2b64b0" stroke-width="1.2" fill="none"/></svg>
</body></html>
